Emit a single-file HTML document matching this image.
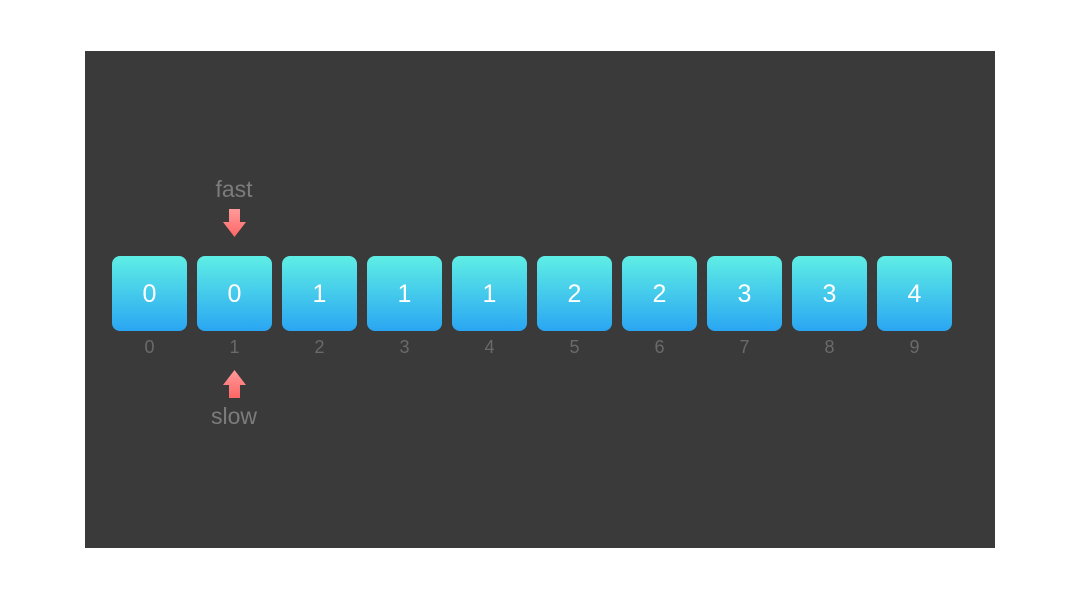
<!DOCTYPE html><html><head><style>
body{margin:0;width:1080px;height:600px;background:#fff;position:relative;font-family:"Liberation Sans",sans-serif;overflow:hidden}
.bg{position:absolute;left:85px;top:51px;width:910px;height:497px;background:#3a3a3a}
.b{position:absolute;top:256px;width:75px;height:75px;border-radius:8px;background:linear-gradient(#5feee5,#2aa6f2);color:#fff;font-size:25px;text-align:center;line-height:77px}
.i{position:absolute;top:337px;width:75px;text-align:center;color:#6a6a6a;font-size:18px}
.t{position:absolute;color:#7c7c7c;font-size:23px;width:100px;text-align:center}
</style></head><body><div class="bg"></div>
<div class="b" style="left:112px">0</div><div class="b" style="left:197px">0</div><div class="b" style="left:282px">1</div><div class="b" style="left:367px">1</div><div class="b" style="left:452px">1</div><div class="b" style="left:537px">2</div><div class="b" style="left:622px">2</div><div class="b" style="left:707px">3</div><div class="b" style="left:792px">3</div><div class="b" style="left:877px">4</div>
<div class="i" style="left:112px">0</div><div class="i" style="left:197px">1</div><div class="i" style="left:282px">2</div><div class="i" style="left:367px">3</div><div class="i" style="left:452px">4</div><div class="i" style="left:537px">5</div><div class="i" style="left:622px">6</div><div class="i" style="left:707px">7</div><div class="i" style="left:792px">8</div><div class="i" style="left:877px">9</div>
<div class="t" style="left:184px;top:176px">fast</div>
<div class="t" style="left:184px;top:403px">slow</div>
<svg style="position:absolute;left:0;top:0" width="1080" height="600">
<defs><linearGradient id="g" x1="0" y1="0" x2="0" y2="1"><stop offset="0" stop-color="#ff9a9a"/><stop offset="1" stop-color="#f66"/></linearGradient></defs>
<path d="M229 209H240V222H246L234.5 237L223 222H229Z" fill="url(#g)"/>
<path d="M229 398H240V385H246L234.5 370L223 385H229Z" fill="url(#g)"/>
</svg>
</body></html>
